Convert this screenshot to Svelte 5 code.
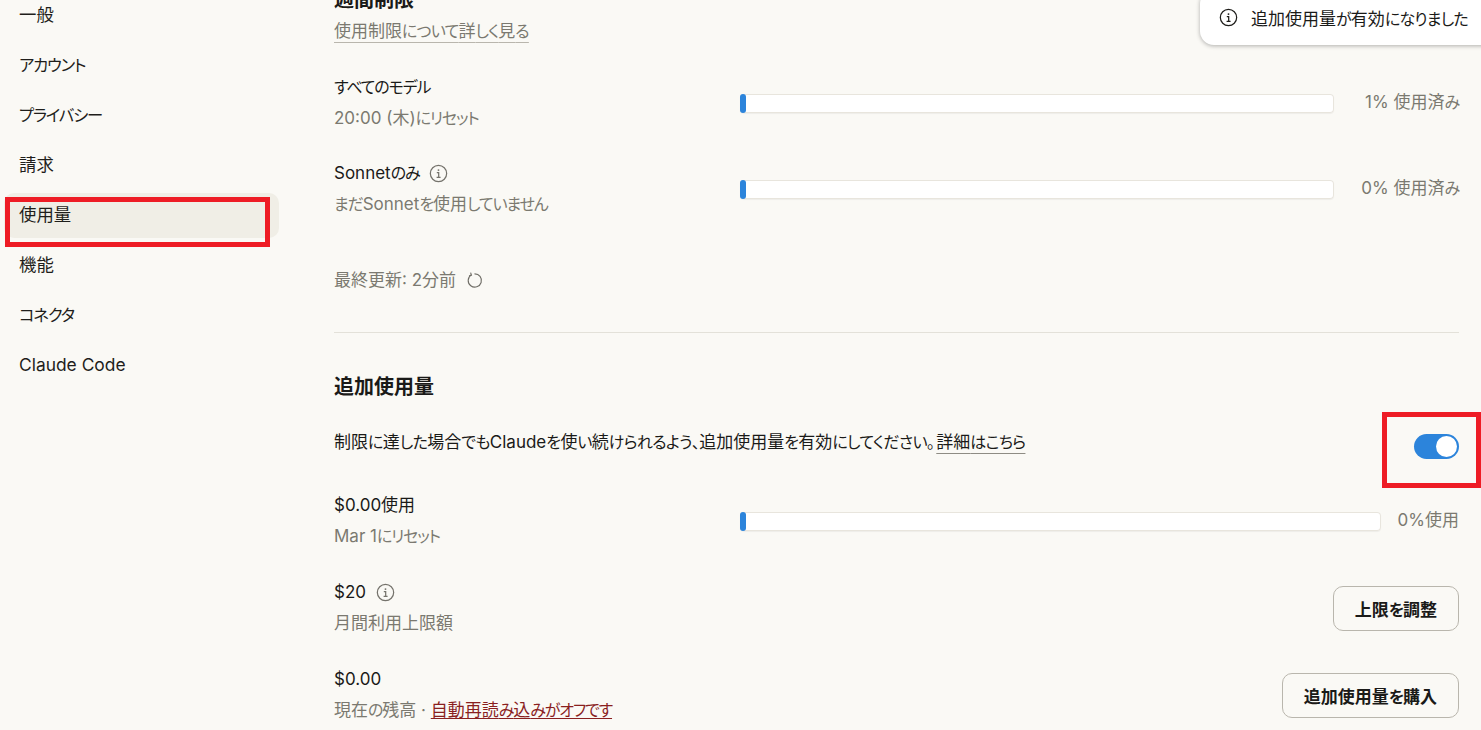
<script>
  const sideItems = ['一般', 'アカウント', 'プライバシー', '請求', '使用量', '機能', 'コネクタ', 'Claude Code'];
  const active = '使用量';

  // kana sets narrower than kanji in the UI font of the screenshot
  const runs = (text) => text.split(/([\u3040-\u30ff、。]+)/).filter(Boolean);
  const isKana = (run) => /^[\u3040-\u30ff、。]/.test(run);
</script>

{#snippet t(text)}
  {#each runs(text) as run}{#if isKana(run)}<span class="k">{run}</span>{:else}{run}{/if}{/each}
{/snippet}

{#snippet infoIcon(cls)}
  <svg class={cls} viewBox="0 0 20 20" fill="none" stroke="currentColor" aria-hidden="true">
    <circle cx="10" cy="10" r="8.6" stroke-width="1.3" />
    <circle cx="10" cy="6.4" r="1" fill="currentColor" stroke="none" />
    <path d="M8.2 9.2H10.2V13.9M8 14.1H12.2" stroke-width="1.3" />
  </svg>
{/snippet}

{#snippet bar()}
  <div class="bar"><div class="fill"></div></div>
{/snippet}

<div class="page">
  <nav class="sidebar">
    {#each sideItems as item}
      <a class="side-item" class:active={item === active} href="#top">{@render t(item)}</a>
    {/each}
  </nav>

  <main class="content">
    <h2 class="weekly">週間制限</h2>
    <a class="learn" href="#top">{@render t('使用制限について詳しく見る')}</a>

    <section class="rows first">
      <div class="row">
        <div class="info">
          <div class="title"><span>{@render t('すべてのモデル')}</span></div>
          <div class="sub">{@render t('20:00 (木)にリセット')}</div>
        </div>
        {@render bar()}
        <div class="pct">{@render t('1% 使用済み')}</div>
      </div>
      <div class="row">
        <div class="info">
          <div class="title"><span>{@render t('Sonnetのみ')}</span> {@render infoIcon('info-icon')}</div>
          <div class="sub">{@render t('まだSonnetを使用していません')}</div>
        </div>
        {@render bar()}
        <div class="pct">{@render t('0% 使用済み')}</div>
      </div>
    </section>

    <div class="updated">
      <span>最終更新: 2分前</span>
      <svg class="refresh" viewBox="0 0 20 20" fill="none" stroke="currentColor" stroke-width="1.3" aria-hidden="true">
        <path d="M6.2 3.4A7.8 7.8 0 1 0 10 2.2" />
        <path d="M5.4 0.8L6.4 3.6L3.6 4.6" />
      </svg>
    </div>

    <hr />

    <h2 class="extra">{@render t('追加使用量')}</h2>
    <div class="desc-row">
      <p>{@render t('制限に達した場合でもClaudeを使い続けられるよう、追加使用量を有効にしてください。')}<a href="#top">{@render t('詳細はこちら')}</a></p>
      <div class="toggle"><span class="knob"></span></div>
    </div>

    <section class="rows extra-rows">
      <div class="row">
        <div class="info">
          <div class="title"><span>$0.00使用</span></div>
          <div class="sub">{@render t('Mar 1にリセット')}</div>
        </div>
        {@render bar()}
        <div class="pct short">0%使用</div>
      </div>
      <div class="row">
        <div class="info">
          <div class="title"><span>$20</span> {@render infoIcon('info-icon')}</div>
          <div class="sub">月間利用上限額</div>
        </div>
        <button class="btn">{@render t('上限を調整')}</button>
      </div>
      <div class="row">
        <div class="info">
          <div class="title"><span>$0.00</span></div>
          <div class="sub">{@render t('現在の残高')} · <a class="reload" href="#top">{@render t('自動再読み込みがオフです')}</a></div>
        </div>
        <button class="btn">{@render t('追加使用量を購入')}</button>
      </div>
    </section>
  </main>

  <div class="toast">
    {@render infoIcon('toast-icon')}
    <span>{@render t('追加使用量が有効になりました')}</span>
  </div>

  <!-- red annotation boxes from the screenshot -->
  <div class="mark mark-side"></div>
  <div class="mark mark-toggle"></div>
</div>

<style>
  :global(body) {
    margin: 0;
    background: #faf9f5;
  }

  .page {
    position: relative;
    display: flex;
    height: 730px;
    overflow: hidden;
    background: #faf9f5;
    color: #1a1a18;
    font-family: "Inter", "Noto Sans CJK JP", sans-serif;
    font-feature-settings: "palt";
    font-size: 17px;
  }

  .k {
    font-size: 0.94em;
    letter-spacing: -0.07em;
  }

  .sidebar {
    display: flex;
    flex-direction: column;
    flex: none;
    gap: 5px;
    width: 275px;
    margin: -7px 0 0 4px;
  }

  .side-item {
    display: block;
    height: 45px;
    padding-left: 15px;
    border-radius: 10px;
    color: #1f1e1b;
    font-size: 17.4px;
    line-height: 44px;
    text-decoration: none;
  }

  .side-item.active {
    background: #f0eee6;
  }

  .content {
    flex: 1;
    min-width: 0;
    margin: -12px 22px 0 55px;
  }

  h2 {
    margin: 0;
    font-size: 20px;
    font-weight: 600;
    line-height: 24px;
  }

  .learn {
    display: inline-block;
    margin-top: 8px;
    color: #7b7970;
    line-height: 23px;
    text-decoration: underline 1px #b9b6ad;
    text-underline-offset: 5px;
  }

  .learn .k {
    letter-spacing: -0.05em;
  }

  .rows {
    display: flex;
    flex-direction: column;
    gap: 24px;
  }

  .rows.first {
    margin-top: 29px;
  }

  .rows.extra-rows {
    gap: 25px;
    margin-top: 31px;
  }

  .row {
    display: flex;
    align-items: center;
    height: 62px;
  }

  .info {
    flex: none;
    width: 405px;
  }

  .title {
    display: flex;
    align-items: center;
    gap: 10px;
    line-height: 31px;
  }

  .sub {
    color: #7b7970;
    line-height: 31px;
  }

  .info-icon {
    width: 19px;
    height: 19px;
    color: #75736c;
  }

  .bar {
    flex: 1;
    height: 19px;
    margin: 1px 0 0 1px;
    border-radius: 4px;
    background: #fff;
    box-shadow: inset 0 0 0 1px #e8e5dd, 0 1px 1px rgba(0, 0, 0, 0.05);
  }

  .fill {
    width: 6px;
    height: 100%;
    border-radius: 3px;
    background: #2c84db;
  }

  .pct {
    flex: none;
    width: 125px;
    margin-bottom: 2px;
    color: #7b7970;
    line-height: 24px;
    text-align: right;
  }

  .pct.short {
    width: 78px;
  }

  .updated {
    display: flex;
    align-items: center;
    gap: 10px;
    margin-top: 48px;
    color: #7b7970;
    line-height: 24px;
  }

  .refresh {
    width: 17px;
    height: 17px;
    color: #6f6d66;
  }

  hr {
    height: 1px;
    margin: 40px 0 0;
    border: 0;
    background: #e3e1d9;
  }

  .extra {
    margin-top: 42px;
  }

  .desc-row {
    display: flex;
    align-items: center;
    justify-content: space-between;
    height: 26px;
    margin-top: 34px;
  }

  .desc-row p {
    margin: 0 0 12px;
  }

  .desc-row .k {
    letter-spacing: -0.04em;
  }

  .desc-row a {
    margin-left: 2px;
    color: #1a1a18;
    text-decoration: underline 1px #8e8c84;
    text-underline-offset: 5px;
  }

  .toggle {
    display: flex;
    align-items: center;
    justify-content: flex-end;
    width: 45px;
    height: 25px;
    padding: 2px;
    box-sizing: border-box;
    border-radius: 13px;
    background: #2c84db;
  }

  .knob {
    width: 21px;
    height: 21px;
    border-radius: 50%;
    background: #fff;
  }

  .btn {
    flex: none;
    height: 45px;
    margin-left: auto;
    padding: 0 21px;
    border: 1px solid #b9b6ad;
    border-radius: 10px;
    background: transparent;
    color: #1a1a18;
    font: inherit;
    font-weight: 600;
  }

  .reload {
    color: #8a1f1f;
    text-decoration: underline 1px;
    text-underline-offset: 2px;
  }

  .toast {
    position: absolute;
    top: -10px;
    left: 1200px;
    display: flex;
    align-items: center;
    gap: 13px;
    width: 300px;
    height: 55px;
    padding-left: 19px;
    box-sizing: border-box;
    border-radius: 14px;
    background: #fff;
    box-shadow: 0 1px 4px rgba(0, 0, 0, 0.3);
  }

  .toast .k {
    letter-spacing: -0.05em;
  }

  .toast-icon {
    flex: none;
    width: 19px;
    height: 19px;
    color: #1f1e1b;
  }

  .mark {
    position: absolute;
    box-sizing: border-box;
    border: 5px solid #ee1c25;
  }

  .mark-side {
    top: 197px;
    left: 5px;
    width: 265px;
    height: 50px;
  }

  .mark-toggle {
    top: 412px;
    left: 1382px;
    width: 99px;
    height: 76px;
  }
</style>
